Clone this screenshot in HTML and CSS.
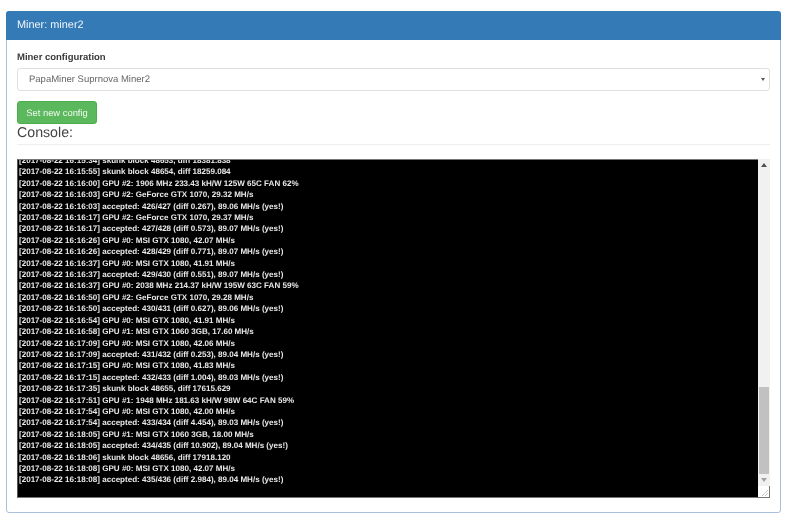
FILE: index.html
```html
<!DOCTYPE html>
<html lang="en">
<head>
<meta charset="utf-8">
<title>Miner: miner2</title>
<link rel="stylesheet" href="styles.css">
</head>
<body>
<div class="panel">
  <div class="panel-heading">Miner: miner2</div>
  <div class="panel-body">
    <label class="field-label">Miner configuration</label>
    <div class="select">
      <span>PapaMiner Suprnova Miner2</span>
      <svg class="select-arrow" width="4" height="3" viewBox="0 0 4 3"><path d="M0 0h4L2 3z" fill="#555"/></svg>
    </div>
    <button class="btn">Set new config</button>
    <h3 class="section-title">Console:</h3>
    <div class="console">
      <div class="console-view">
        <pre class="console-text">[2017-08-22 16:15:34] skunk block 48653, diff 18381.838
[2017-08-22 16:15:55] skunk block 48654, diff 18259.084
[2017-08-22 16:16:00] GPU #2: 1906 MHz 233.43 kH/W 125W 65C FAN 62%
[2017-08-22 16:16:03] GPU #2: GeForce GTX 1070, 29.32 MH/s
[2017-08-22 16:16:03] accepted: 426/427 (diff 0.267), 89.06 MH/s (yes!)
[2017-08-22 16:16:17] GPU #2: GeForce GTX 1070, 29.37 MH/s
[2017-08-22 16:16:17] accepted: 427/428 (diff 0.573), 89.07 MH/s (yes!)
[2017-08-22 16:16:26] GPU #0: MSI GTX 1080, 42.07 MH/s
[2017-08-22 16:16:26] accepted: 428/429 (diff 0.771), 89.07 MH/s (yes!)
[2017-08-22 16:16:37] GPU #0: MSI GTX 1080, 41.91 MH/s
[2017-08-22 16:16:37] accepted: 429/430 (diff 0.551), 89.07 MH/s (yes!)
[2017-08-22 16:16:37] GPU #0: 2038 MHz 214.37 kH/W 195W 63C FAN 59%
[2017-08-22 16:16:50] GPU #2: GeForce GTX 1070, 29.28 MH/s
[2017-08-22 16:16:50] accepted: 430/431 (diff 0.627), 89.06 MH/s (yes!)
[2017-08-22 16:16:54] GPU #0: MSI GTX 1080, 41.91 MH/s
[2017-08-22 16:16:58] GPU #1: MSI GTX 1060 3GB, 17.60 MH/s
[2017-08-22 16:17:09] GPU #0: MSI GTX 1080, 42.06 MH/s
[2017-08-22 16:17:09] accepted: 431/432 (diff 0.253), 89.04 MH/s (yes!)
[2017-08-22 16:17:15] GPU #0: MSI GTX 1080, 41.83 MH/s
[2017-08-22 16:17:15] accepted: 432/433 (diff 1.004), 89.03 MH/s (yes!)
[2017-08-22 16:17:35] skunk block 48655, diff 17615.629
[2017-08-22 16:17:51] GPU #1: 1948 MHz 181.63 kH/W 98W 64C FAN 59%
[2017-08-22 16:17:54] GPU #0: MSI GTX 1080, 42.00 MH/s
[2017-08-22 16:17:54] accepted: 433/434 (diff 4.454), 89.03 MH/s (yes!)
[2017-08-22 16:18:05] GPU #1: MSI GTX 1060 3GB, 18.00 MH/s
[2017-08-22 16:18:05] accepted: 434/435 (diff 10.902), 89.04 MH/s (yes!)
[2017-08-22 16:18:06] skunk block 48656, diff 17918.120
[2017-08-22 16:18:08] GPU #0: MSI GTX 1080, 42.07 MH/s
[2017-08-22 16:18:08] accepted: 435/436 (diff 2.984), 89.04 MH/s (yes!)</pre>
      </div>
      <div class="scrollbar">
        <div class="scroll-btn"><svg width="6" height="4" viewBox="0 0 6 4"><path d="M3 0l3 4H0z" fill="#505050"/></svg></div>
        <div class="scroll-track"><div class="scroll-thumb"></div></div>
        <div class="scroll-btn"><svg width="6" height="4" viewBox="0 0 6 4"><path d="M0 0h6L3 4z" fill="#a3a3a3"/></svg></div>
        <div class="resizer"><svg width="11" height="11" viewBox="0 0 11 11"><path d="M10 4L4 10M10 7L7 10" stroke="#c4c4c4" fill="none"/></svg></div>
      </div>
    </div>
  </div>
</div>
</body>
</html>
```
FILE: styles.css
```css
* { box-sizing: border-box; }
html, body { margin: 0; height: 100%; background: #fff; }
body {
  padding: 11px 19px 18px 6px;
  font-family: "Liberation Sans", Arial, sans-serif;
  color: #333;
  text-rendering: geometricPrecision;
}
.panel {
  height: 502px;
  border: 1px solid #a9bfdc;
  border-radius: 3px;
  background: #fff;
  filter: blur(0.3px);
}
.panel-heading {
  height: 29px;
  margin: -1px -1px 0;
  padding: 0 11px;
  background: #337ab7;
  border-radius: 3px 3px 0 0;
  color: #f2f6fa;
  font-size: 10.9px;
  line-height: 29px;
}
.panel-body {
  padding: 12px 10px 0;
}
.field-label {
  display: block;
  font-size: 9.5px;
  font-weight: bold;
  line-height: 12px;
  margin-bottom: 4px;
  color: #3a3a3a;
}
.select {
  display: flex;
  align-items: center;
  justify-content: space-between;
  height: 23px;
  padding: 0 4px 0 11px;
  border: 1px solid #dfdfdf;
  border-radius: 3px;
  font-size: 9.5px;
  color: #666;
}
.btn {
  display: block;
  width: 80px;
  height: 23px;
  margin-top: 10px;
  padding: 0;
  border: 1px solid #4cae4c;
  border-radius: 3px;
  background: #5cb85c;
  color: #f2faf2;
  font-family: inherit;
  font-size: 9.4px;
  text-rendering: geometricPrecision;
}
.section-title {
  margin: 0;
  padding: 1px 0 2px;
  border-bottom: 1px solid #eee;
  font-size: 14.2px;
  font-weight: normal;
  line-height: 17px;
  color: #444;
}
.console {
  display: flex;
  height: 339px;
  margin-top: 14px;
}
.console-view {
  flex: 1;
  overflow: hidden;
  background: #000;
  border-top: 1px solid #777;
  border-bottom: 1px solid #777;
  border-left: 1px solid #555;
}
.console-text {
  margin: -5px 0 0 1px;
  color: #e8e8e8;
  font-family: "Liberation Sans", Arial, sans-serif;
  font-size: 8.05px;
  font-weight: bold;
  line-height: 11.4px;
  white-space: pre;
}
.scrollbar {
  display: flex;
  flex-direction: column;
  width: 12px;
  background: #f1f1f1;
}
.scroll-btn {
  display: flex;
  align-items: center;
  justify-content: center;
  height: 12px;
  flex: none;
}
.scroll-track {
  flex: 1;
  display: flex;
  flex-direction: column;
  justify-content: flex-end;
  padding: 0 1px;
}
.scroll-thumb {
  height: 87px;
  background: #c1c1c1;
}
.resizer {
  height: 12px;
  flex: none;
  background: #fff;
  border-bottom: 1px solid #777;
  border-right: 1px solid #777;
  line-height: 0;
}
```
